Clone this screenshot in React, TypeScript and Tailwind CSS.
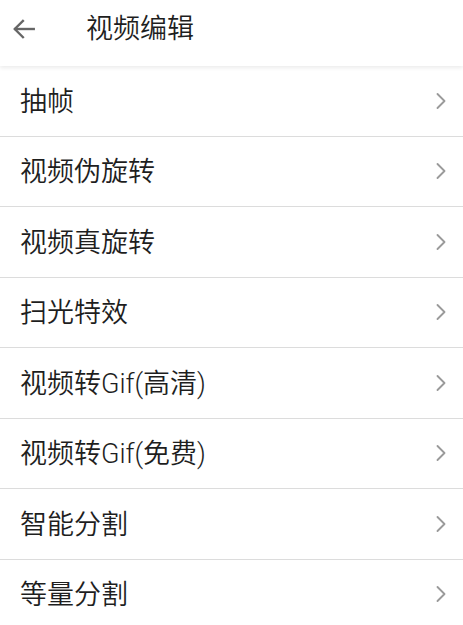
import { ChevronRight } from 'lucide-react';

const items = [
  '抽帧',
  '视频伪旋转',
  '视频真旋转',
  '扫光特效',
  '视频转Gif(高清)',
  '视频转Gif(免费)',
  '智能分割',
  '等量分割',
];

function BackArrow() {
  return (
    <svg width="26" height="26" viewBox="0 0 24 24" fill="none" stroke="#666" strokeWidth="2.2" strokeLinecap="square">
      <path d="M21 12H4" />
      <path d="M11 4.5L3.5 12L11 19.5" />
    </svg>
  );
}

export default function App() {
  return (
    <div
      className="min-h-screen bg-white text-[#1e1e1e]"
      style={{ fontFamily: 'Roboto, "Noto Sans CJK SC", sans-serif' }}
    >
      {/* header */}
      <div className="relative z-10 flex h-[66px] items-center bg-white pb-[8px] shadow-[0_2px_4px_rgba(0,0,0,0.08)]">
        <div className="flex w-[86px] items-center pl-[11px]">
          <BackArrow />
        </div>
        <h1 className="text-[27px] font-[350] leading-none">视频编辑</h1>
      </div>

      {/* list */}
      <ul>
        {items.map((label) => (
          <li
            key={label}
            className="flex h-[70.5px] items-center justify-between border-b border-[#dcdcdc] pl-[20px] pr-[8px]"
          >
            <span className="pt-[3px] text-[27px] font-[350] leading-none">{label}</span>
            <ChevronRight size={28} color="#9a9a9a" strokeWidth={1.6} />
          </li>
        ))}
      </ul>
    </div>
  );
}
